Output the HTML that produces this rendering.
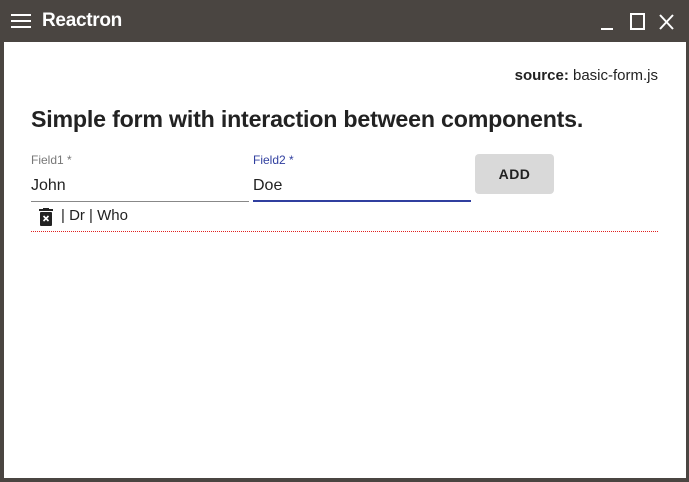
<!DOCTYPE html>
<html><head><meta charset="utf-8"><style>
*{margin:0;padding:0;box-sizing:border-box}
html,body{width:689px;height:482px;overflow:hidden;background:#4a4541;font-family:"Liberation Sans",sans-serif}
.bar{position:absolute;left:0;top:0;width:689px;height:42px;background:#4a4541;color:#fff}
.title{position:absolute;left:42px;top:10px;font-size:19px;font-weight:bold;letter-spacing:-0.3px}
.main{position:absolute;left:4px;top:42px;width:682px;height:436px;background:#fff}
.src{position:absolute;right:28px;top:25px;font-size:15px;color:#222}
h1{position:absolute;left:27px;top:64px;font-size:23.2px;font-weight:bold;color:#222;letter-spacing:-0.2px}
.lbl{position:absolute;font-size:12px;color:#777}
.val{position:absolute;font-size:16px;color:#222}
.btn{position:absolute;left:471px;top:112px;width:79px;height:40px;background:#d9d9d9;border-radius:4px;font-size:14px;font-weight:bold;color:#222;text-align:center;line-height:40px;letter-spacing:0.5px}
</style></head><body>
<div class="bar">
<svg style="position:absolute;left:11px;top:14px" width="20" height="14"><rect y="0" width="20" height="2" fill="#fff"/><rect y="6" width="20" height="2" fill="#fff"/><rect y="12" width="20" height="2" fill="#fff"/></svg>
<div class="title">Reactron</div>
<svg style="position:absolute;left:600px;top:13px" width="80" height="18">
<rect x="1" y="15" width="12" height="2" fill="#fff"/>
<rect x="31" y="1" width="13" height="15" fill="none" stroke="#fff" stroke-width="2"/>
<path d="M60 2 L73 16 M73 2 L60 16" stroke="#fff" stroke-width="2"/>
</svg>
</div>
<div class="main">
<div class="src"><b>source:</b> basic-form.js</div>
<h1>Simple form with interaction between components.</h1>
<div class="lbl" style="left:27px;top:111px">Field1 *</div>
<div class="val" style="left:27px;top:135px">John</div>
<div style="position:absolute;left:27px;top:159px;width:218px;height:1px;background:#888"></div>
<div class="lbl" style="left:249px;top:111px;color:#303f9f">Field2 *</div>
<div class="val" style="left:249px;top:135px">Doe</div>
<div style="position:absolute;left:249px;top:158px;width:218px;height:2px;background:#303f9f"></div>
<div class="btn">ADD</div>
<svg style="position:absolute;left:35px;top:166px" width="14" height="18"><rect x="0" y="1" width="14" height="2" fill="#222"/><rect x="4" y="0" width="6" height="2" fill="#222"/><rect x="1" y="4" width="12" height="14" rx="1" fill="#222"/><path d="M4.5 8 L9.5 13 M9.5 8 L4.5 13" stroke="#fff" stroke-width="1.6"/></svg>
<div class="val" style="left:57px;top:165px;font-size:15px">| Dr | Who</div>
<div style="position:absolute;left:27px;top:189px;width:627px;border-top:1px dotted #e02020"></div>
</div>
</body></html>
